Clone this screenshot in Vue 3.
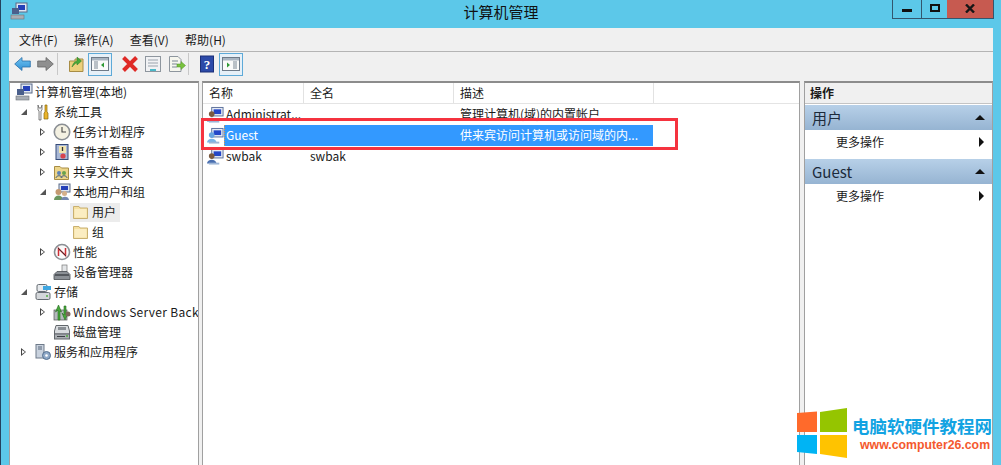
<script setup>
const menus = ['文件(F)', '操作(A)', '查看(V)', '帮助(H)']
const tree = [
  { label: '计算机管理(本地)', icon: 'mgmt', indent: 0, arrow: '' },
  { label: '系统工具', icon: 'tools', indent: 19, arrow: 'open' },
  { label: '任务计划程序', icon: 'clock', indent: 38, arrow: 'closed' },
  { label: '事件查看器', icon: 'event', indent: 38, arrow: 'closed' },
  { label: '共享文件夹', icon: 'share', indent: 38, arrow: 'closed' },
  { label: '本地用户和组', icon: 'users', indent: 38, arrow: 'open' },
  { label: '用户', icon: 'folder', indent: 57, arrow: '', selected: true },
  { label: '组', icon: 'folder', indent: 57, arrow: '' },
  { label: '性能', icon: 'perf', indent: 38, arrow: 'closed' },
  { label: '设备管理器', icon: 'device', indent: 38, arrow: '' },
  { label: '存储', icon: 'storage', indent: 19, arrow: 'open' },
  { label: 'Windows Server Back', icon: 'backup', indent: 38, arrow: 'closed' },
  { label: '磁盘管理', icon: 'disk', indent: 38, arrow: '' },
  { label: '服务和应用程序', icon: 'services', indent: 19, arrow: 'closed' }
]
const rows = [
  { name: 'Administrat...', full: '', desc: '管理计算机(域)的内置帐户' },
  { name: 'Guest', full: '', desc: '供来宾访问计算机或访问域的内...', selected: true },
  { name: 'swbak', full: 'swbak', desc: '' }
]
</script>

<template>
  <div class="win">
    <div class="titlebar">
      <svg class="appicon" width="18" height="18" viewBox="0 0 18 18">
        <rect x="6" y="1" width="11" height="9" fill="#dfe6f2" stroke="#5a6a88" />
        <rect x="8" y="3" width="7" height="5" fill="#2440b8" />
        <rect x="2" y="6" width="7" height="6" fill="#4a5f8c" />
        <rect x="1" y="13" width="13" height="4" fill="#a8adb4" stroke="#6d7278" stroke-width=".6" />
      </svg>
      <div class="title">计算机管理</div>
      <div class="winbtns">
        <div class="wb wb-min"><i></i></div>
        <div class="wb wb-max"><i></i></div>
        <div class="wb wb-close">
          <svg width="10" height="9" viewBox="0 0 10 9"><path d="M1 .5 L9 8.500 M9 .5 L1 8.500" stroke="#161616" stroke-width="2.400" /></svg>
        </div>
      </div>
    </div>

    <div class="client">
      <div class="menubar">
        <span v-for="m in menus" :key="m" class="menu">{{ m }}</span>
      </div>
      <div class="toolbar">
        <svg class="tb tb-b" width="17" height="16" viewBox="0 0 17 16">
          <defs><linearGradient id="ga" x1="0" y1="0" x2="0" y2="1"><stop offset="0" stop-color="#6fc4f2" /><stop offset="1" stop-color="#2f8fd4" /></linearGradient></defs>
          <path d="M.7 8 L8 1.500 V5 H16.300 V11 H8 V14.500 Z" fill="url(#ga)" stroke="#2a6fa8" stroke-width=".8" />
        </svg>
        <svg class="tb tb-f" width="17" height="16" viewBox="0 0 17 16"><path d="M16.300 8 L9 1.500 V5 H.7 V11 H9 V14.500 Z" fill="#8f8f8f" stroke="#666" stroke-width=".8" /></svg>
        <span class="sep sep1"></span>
        <svg class="tb tb-up" width="17" height="18" viewBox="0 0 17 18">
          <path d="M1.500 6 H7 V4 H15 V16.500 H1.500 Z" fill="#ecd07c" stroke="#a88d45" />
          <path d="M4 12 C5 8 7 6 9 6 V2 L13.500 6 L9 10 V8 C7 8 6 10 4 12 Z" fill="#47a838" stroke="#2e7a25" stroke-width=".5" />
        </svg>
        <span class="tbbox">
          <svg width="18" height="16" viewBox="0 0 18 16">
            <rect x=".5" y="1.500" width="17" height="13" fill="#fafafa" stroke="#6e7a88" />
            <rect x="1" y="2" width="16" height="2.500" fill="#a9b4c0" />
            <path d="M3 6 H7 M3 8 H7 M3 10 H7 M3 12 H7" stroke="#7a8794" />
            <path d="M13 6.500 L10 9 L13 11.500 Z" fill="#2f9a35" />
          </svg>
        </span>
        <svg class="tb tb-x" width="18" height="18" viewBox="0 0 18 18"><path d="M2.500 2.500 L15.500 15.500 M15.500 2.500 L2.500 15.500" stroke="#df2a26" stroke-width="4" /></svg>
        <svg class="tb tb-p" width="16" height="18" viewBox="0 0 16 18">
          <rect x=".5" y="1.500" width="15" height="15" fill="#f1f2f4" stroke="#8e969e" />
          <path d="M3 5 H13 M3 8 H13 M3 11 H13" stroke="#9aa3ac" />
          <rect x="5" y="14" width="6" height="2" fill="#4bb8c8" />
        </svg>
        <svg class="tb tb-e" width="18" height="18" viewBox="0 0 18 18">
          <path d="M1.500 1.500 H10 L13 4.500 V16.500 H1.500 Z" fill="#f6f6ee" stroke="#8e969e" />
          <path d="M4 6 H10 M4 9 H9 M4 12 H9" stroke="#7a8794" />
          <path d="M9 9 H13 V6.500 L17.500 10.500 L13 14.500 V12 H9 Z" fill="#79c23e" stroke="#4d9124" stroke-width=".5" />
        </svg>
        <span class="sep sep2"></span>
        <svg class="tb tb-h" width="15" height="18" viewBox="0 0 15 18">
          <rect x=".5" y="1" width="13" height="16" fill="#2c4aa8" stroke="#1b2f78" />
          <text x="7" y="14" text-anchor="middle" class="qm">?</text>
        </svg>
        <span class="tbbox tbbox2">
          <svg width="18" height="16" viewBox="0 0 18 16">
            <rect x=".5" y="1.500" width="17" height="13" fill="#fafafa" stroke="#6e7a88" />
            <rect x="1" y="2" width="16" height="2.500" fill="#a9b4c0" />
            <path d="M11 6 H15 M11 8 H15 M11 10 H15 M11 12 H15" stroke="#7a8794" />
            <path d="M5 6.500 L8 9 L5 11.500 Z" fill="#2f9a35" />
          </svg>
        </span>
      </div>

      <div class="panes">
        <div class="pane tree">
          <div v-for="n in tree" :key="n.label" class="node" :style="{ paddingLeft: n.indent + 'px' }">
            <span class="arrow" :class="n.arrow"></span>
            <span class="nicon" :class="{ selbg: n.selected }">
              <svg width="18" height="18" viewBox="0 0 18 18">
                <g v-if="n.icon === 'mgmt'">
                  <rect x="6" y="1" width="11" height="9" fill="#dfe6f2" stroke="#5a6a88" />
                  <rect x="8" y="3" width="7" height="5" fill="#2440b8" />
                  <rect x="2" y="6" width="7" height="6" fill="#4a5f8c" />
                  <rect x="1" y="13" width="13" height="4" fill="#a8adb4" stroke="#6d7278" stroke-width=".6" />
                </g>
                <g v-else-if="n.icon === 'tools'">
                  <path d="M4 2 V7 L5 8 V17 H7 V8 L8 7 V2 L7 5 H5 Z" fill="#f0f0f0" stroke="#555" stroke-width=".7" />
                  <path d="M11 2 H13 V9 L14 10 V16 H10 V10 L11 9 Z" fill="#eab32a" stroke="#8a6a10" stroke-width=".7" />
                </g>
                <g v-else-if="n.icon === 'clock'">
                  <circle cx="9" cy="9" r="7.700" fill="#f4f1e2" stroke="#8b8f94" stroke-width="1.600" />
                  <path d="M9 4 V9 H13" fill="none" stroke="#444" stroke-width="1.100" />
                </g>
                <g v-else-if="n.icon === 'event'">
                  <rect x="3" y="1.500" width="12" height="15" fill="#a9b8d6" stroke="#344a78" />
                  <rect x="6" y="3" width="7" height="7" fill="#f2e6b0" />
                  <path d="M9.500 4 V8" stroke="#333" stroke-width="1.300" />
                  <circle cx="10" cy="13" r="2.600" fill="#d8434c" />
                </g>
                <g v-else-if="n.icon === 'share'">
                  <path d="M1.500 3.500 H7 L8.500 5 H15.500 V16.500 H1.500 Z" fill="#ecd58a" stroke="#a88d45" />
                  <circle cx="6" cy="10" r="2" fill="#5e83b6" /><circle cx="11" cy="10" r="2" fill="#6aa24c" />
                  <path d="M3 15 C3 12 9 12 9 15 M8 15 C8 12 14 12 14 15" stroke="#49627e" fill="none" />
                </g>
                <g v-else-if="n.icon === 'users'">
                  <rect x="6" y="1" width="11" height="8" fill="#dfe6f2" stroke="#5a6a88" />
                  <rect x="8" y="3" width="7" height="4" fill="#2440b8" />
                  <circle cx="5.500" cy="9" r="3" fill="#c49a72" />
                  <path d="M1 17 C1 11 10 11 10 17 Z" fill="#6b9660" />
                  <circle cx="11.500" cy="10.500" r="2.500" fill="#d6b08a" />
                  <path d="M8 17 C8 12.500 16 12.500 16 17 Z" fill="#7487b0" />
                </g>
                <g v-else-if="n.icon === 'folder'">
                  <path d="M1.500 3.500 H7 L8 5 H15.500 V15.500 H1.500 Z" fill="#f5e0a0" stroke="#c9b071" />
                  <rect x="2.500" y="6" width="12" height="8.500" fill="#fbedc2" />
                </g>
                <g v-else-if="n.icon === 'perf'">
                  <circle cx="9" cy="9" r="7.500" fill="#fafafa" stroke="#8b8f94" stroke-width="1.600" />
                  <path d="M5.500 13 V5.500 L12.500 12.500 V5" fill="none" stroke="#cc2f36" stroke-width="1.500" />
                  <path d="M5 5 L13 13" stroke="#333" stroke-width=".9" />
                </g>
                <g v-else-if="n.icon === 'device'">
                  <rect x="9" y="2" width="5" height="7" fill="#e4e6e8" stroke="#777" stroke-width=".7" />
                  <path d="M1 16.500 V11.500 L4 8.500 H14 L17 11.500 V16.500 Z" fill="#8b9096" stroke="#4a4e54" stroke-width=".8" />
                  <rect x="2" y="11" width="14" height="2" fill="#54585e" />
                </g>
                <g v-else-if="n.icon === 'storage'">
                  <rect x="3" y="1.500" width="10" height="7" rx="1.500" fill="#e7eaed" stroke="#666c73" />
                  <rect x="9" y="3" width="8" height="4" fill="#3fa6e0" />
                  <rect x="2" y="9.500" width="14" height="7" rx="1.500" fill="#d4d7da" stroke="#666c73" />
                  <circle cx="13" cy="13" r="1" fill="#54b040" />
                </g>
                <g v-else-if="n.icon === 'backup'">
                  <rect x="1" y="7" width="13" height="10" fill="#b4b8bd" stroke="#555" stroke-width=".7" />
                  <path d="M5 17 V7 L2.500 9 L5.500 2 L8.500 9 L7 8 V17 Z" fill="#48a83c" stroke="#256d1f" stroke-width=".6" />
                  <path d="M11 3 V12 L9 10 L12 17 L15 10 L13 12 V3 Z" fill="#48a83c" stroke="#256d1f" stroke-width=".6" />
                  <circle cx="15" cy="11" r="2.500" fill="#7c675c" />
                </g>
                <g v-else-if="n.icon === 'disk'">
                  <path d="M3 2.500 H15 L16.500 8 V11 H1.500 V8 Z" fill="#d9dcdf" stroke="#62676c" />
                  <rect x="5" y="4" width="8" height="3" fill="#8a8f95" />
                  <rect x="1.500" y="11" width="15" height="5" fill="#a9adb2" stroke="#62676c" />
                  <rect x="4" y="13" width="8" height="1" fill="#3c4046" />
                  <circle cx="14" cy="13" r="1" fill="#52ad3e" />
                </g>
                <g v-else>
                  <rect x="2" y="1.500" width="8" height="13.500" fill="#c9d2de" stroke="#6e7a8a" />
                  <path d="M4 4 H8 M4 6 H8" stroke="#59677a" />
                  <circle cx="12.500" cy="12.500" r="4" fill="#8fa9c8" stroke="#55708f" />
                  <circle cx="12.500" cy="12.500" r="1.300" fill="#fff" />
                </g>
              </svg>
            </span>
            <span class="nlabel" :class="{ sellabel: n.selected, latin: n.icon === 'backup' }">{{ n.label }}</span>
          </div>
        </div>

        <div class="pane list">
          <div class="thead">
            <span class="th c1">名称</span>
            <span class="th c2">全名</span>
            <span class="th c3">描述</span>
          </div>
          <div class="rows">
            <div v-for="r in rows" :key="r.name" class="row">
              <svg class="uicon" width="17" height="18" viewBox="0 0 18 18">
                <rect x="5" y="1" width="12" height="9" fill="#e6ebf4" stroke="#5a6f99" />
                <rect x="7" y="3" width="8" height="5" fill="#2447c8" />
                <circle cx="5" cy="8" r="3" :fill="r.selected ? '#68a4e0' : '#7b5a3f'" />
                <path d="M0 16 C0 10.500 10 10.500 10 16 Z" :fill="r.selected ? '#77b4e8' : '#4a6fb0'" />
                <rect x="2" y="15" width="11" height="2" fill="#9db5d6" />
              </svg>
              <div class="cells" :class="{ sel: r.selected }">
                <span class="td c1t">{{ r.name }}</span>
                <span class="td c2t">{{ r.full }}</span>
                <span class="td c3t">{{ r.desc }}</span>
              </div>
            </div>
          </div>
        </div>

        <div class="pane actions">
          <div class="ahead">操作</div>
          <div class="agroup">用户<b class="up"></b></div>
          <div class="aitem">更多操作<b class="rt"></b></div>
          <div class="agroup g2">Guest<b class="up"></b></div>
          <div class="aitem">更多操作<b class="rt"></b></div>
        </div>
      </div>
    </div>

    <div class="redbox"></div>

    <div class="wm">
      <svg class="wmlogo" width="50" height="50" viewBox="0 0 50 50">
        <path d="M0 5 L20 3.500 V24 H0 Z" fill="#ff6a2b" />
        <path d="M23 4 L50 0 V24 H23 Z" fill="#95c500" />
        <path d="M0 27 H20 V46 L0 44 Z" fill="#00b4f4" />
        <path d="M23 27 H50 V50 L23 46 Z" fill="#ffc300" />
      </svg>
      <div class="wmtext">
        <div class="wm1">电脑软硬件教程网</div>
        <div class="wm2">www.computer26.com</div>
      </div>
    </div>
  </div>
</template>

<style>
html, body { margin: 0; padding: 0; }
</style>

<style scoped>
.win {
  position: relative;
  width: 1001px;
  height: 465px;
  overflow: hidden;
  background: #5cc8e9;
  font-family: "Noto Sans CJK SC", "Liberation Sans", sans-serif;
  font-size: 12px;
  color: #1a1a1a;
  display: flex;
  flex-direction: column;
  box-sizing: border-box;
  padding: 0 8px 0 8px;
  border-left: 1px solid #24425e;
}
.titlebar {
  height: 28px;
  flex: none;
  display: flex;
  align-items: flex-start;
  position: relative;
}
.appicon { margin: 2px 0 0 1px; }
.title {
  position: absolute;
  left: 0;
  right: 0;
  top: 3px;
  text-align: center;
  font-size: 15px;
  line-height: 17px;
  color: #111;
}
.winbtns {
  margin-left: auto;
  margin-right: -1px;
  display: flex;
  height: 18px;
  border: 1px solid #33566e;
  border-top: 0;
}
.wb { display: flex; align-items: center; justify-content: center; height: 18px; }
.wb-min { width: 28px; border-right: 1px solid #33566e; }
.wb-min i { width: 10px; height: 3px; background: #111; margin-top: 3px; }
.wb-max { width: 25px; }
.wb-max i { width: 6px; height: 4px; border: 2px solid #111; margin-top: -2px; }
.wb-close { width: 46px; background: #c75a50; }
.wb-close svg { margin-top: -2px; }
.client {
  flex: 1;
  background: #f0f0f0;
  display: flex;
  flex-direction: column;
  min-height: 0;
}
.menubar {
  height: 24px;
  box-sizing: border-box;
  flex: none;
  display: flex;
  align-items: center;
  padding-left: 10px;
  border-bottom: 1px solid #b4b4b4;
  gap: 16.300px;
  font-size: 12px;
}
.toolbar {
  height: 29px;
  box-sizing: border-box;
  padding: 0 0 5px 5px;
  flex: none;
  display: flex;
  align-items: center;
}
.tb { flex: none; }
.tb-f { margin-left: 6px; }
.sep { width: 1px; height: 22px; background: #c8c8c8; flex: none; }
.sep1 { margin: 0 10px 0 3px; }
.sep2 { margin: 0 11px 0 2px; }
.tbbox {
  width: 22px;
  height: 21px;
  border: 1px solid #5eaad8;
  background: #e6f0f8;
  display: flex;
  align-items: center;
  justify-content: center;
  margin-left: 3px;
  flex: none;
}
.tb-x { margin-left: 9px; }
.tb-p { margin-left: 6px; }
.tb-e { margin-left: 7px; }
.tbbox2 { margin-left: 4px; }
.qm { font: bold 13px "Liberation Serif", serif; fill: #fff; }
.panes {
  flex: 1;
  display: flex;
  min-height: 0;
  gap: 3px;
}
.pane {
  background: #fff;
  border: 1px solid #a0a0a0;
  border-top: 2px solid #8c8c8c;
  border-bottom: 0;
  box-sizing: border-box;
  overflow: hidden;
  flex: none;
}
.tree { width: 190px; }
.node {
  height: 20px;
  box-sizing: border-box;
  padding-bottom: 2px;
  display: flex;
  align-items: center;
  white-space: nowrap;
  overflow: hidden;
}
.arrow { width: 0; flex: none; height: 10px; position: relative; }
.arrow.closed::before {
  content: "";
  position: absolute;
  left: -8px;
  top: 1px;
  border-left: 5px solid #444;
  border-top: 4px solid transparent;
  border-bottom: 4px solid transparent;
}
.arrow.closed::after {
  content: "";
  position: absolute;
  left: -7px;
  top: 3px;
  border-left: 3px solid #fff;
  border-top: 2px solid transparent;
  border-bottom: 2px solid transparent;
}
.arrow.open::before {
  content: "";
  position: absolute;
  left: -8px;
  top: 2px;
  border-right: 6px solid #555;
  border-top: 6px solid transparent;
}
.nicon { width: 18px; height: 18px; flex: none; display: block; margin-left: 5px; }
.nicon svg { display: block; }
.selbg {
  height: 20px;
  display: flex;
  align-items: center;
  background: #ececec;
  box-shadow: -2px 0 0 #ececec;
}
.nlabel { margin-left: 2px; line-height: 18px; }
.latin { letter-spacing: .3px; }
.sellabel {
  background: #ececec;
  line-height: 20px;
  margin-left: 0;
  padding: 0 4px 0 2px;
}
.list { width: 598px; }
.thead { height: 20px; display: flex; border-bottom: 1px solid #e4e4e4; }
.th {
  box-sizing: border-box;
  padding-left: 6px;
  border-right: 1px solid #e2e2e2;
  line-height: 20px;
}
.c1 { width: 101px; }
.c2 { width: 150px; }
.c3 { width: 200px; }
.row {
  height: 21px;
  display: flex;
  align-items: center;
  margin-left: 4px;
}
.uicon { flex: none; }
.cells {
  display: flex;
  width: 429px;
  height: 21px;
  box-sizing: border-box;
  align-items: center;
  white-space: nowrap;
  padding: 0 0 3px 2px;
}
.cells.sel {
  background: #3399ff;
  color: #fff;
  border-left: 1px dotted #d89a50;
  padding-left: 1px;
}
.td { box-sizing: border-box; overflow: hidden; }
.c1t { width: 84px; }
.c2t { width: 150px; }
.c3t { width: 190px; }
.actions { width: 189px; margin-left: 1px; }
.ahead {
  height: 20px;
  line-height: 20px;
  padding-left: 5px;
  font-weight: 700;
  background: #f0f0f0;
  border-bottom: 1px solid #c4c4c4;
  margin-bottom: 1px;
}
.agroup {
  height: 25px;
  line-height: 25px;
  padding-left: 7px;
  font-size: 15px;
  color: #1c2a3a;
  background: linear-gradient(#b7d0e8, #96b4d2);
  position: relative;
}
.g2 { margin-top: 4px; }
.up {
  position: absolute;
  right: 7px;
  top: 10px;
  border-bottom: 5px solid #111;
  border-left: 5px solid transparent;
  border-right: 5px solid transparent;
}
.aitem {
  height: 25px;
  line-height: 23px;
  padding-left: 31px;
  position: relative;
}
.rt {
  position: absolute;
  right: 8px;
  top: 7px;
  border-left: 5px solid #111;
  border-top: 5px solid transparent;
  border-bottom: 5px solid transparent;
}
.redbox {
  position: absolute;
  left: 200px;
  top: 118px;
  width: 477px;
  height: 32px;
  box-sizing: border-box;
  border: 3px solid #f5333f;
  pointer-events: none;
}
.wm {
  position: absolute;
  left: 796px;
  top: 408px;
  display: flex;
}
.wmlogo { flex: none; overflow: visible; }
.wmtext { margin-left: 5px; }
.wm1 {
  font-size: 17.500px;
  line-height: 20px;
  font-weight: 700;
  color: #12a3e2;
  margin-top: 8px;
  white-space: nowrap;
}
.wm2 {
  font-family: "Liberation Sans", sans-serif;
  font-size: 12.300px;
  line-height: 14px;
  font-weight: 700;
  color: #f4592e;
  margin: 2px 0 0 8px;
  white-space: nowrap;
}
</style>
